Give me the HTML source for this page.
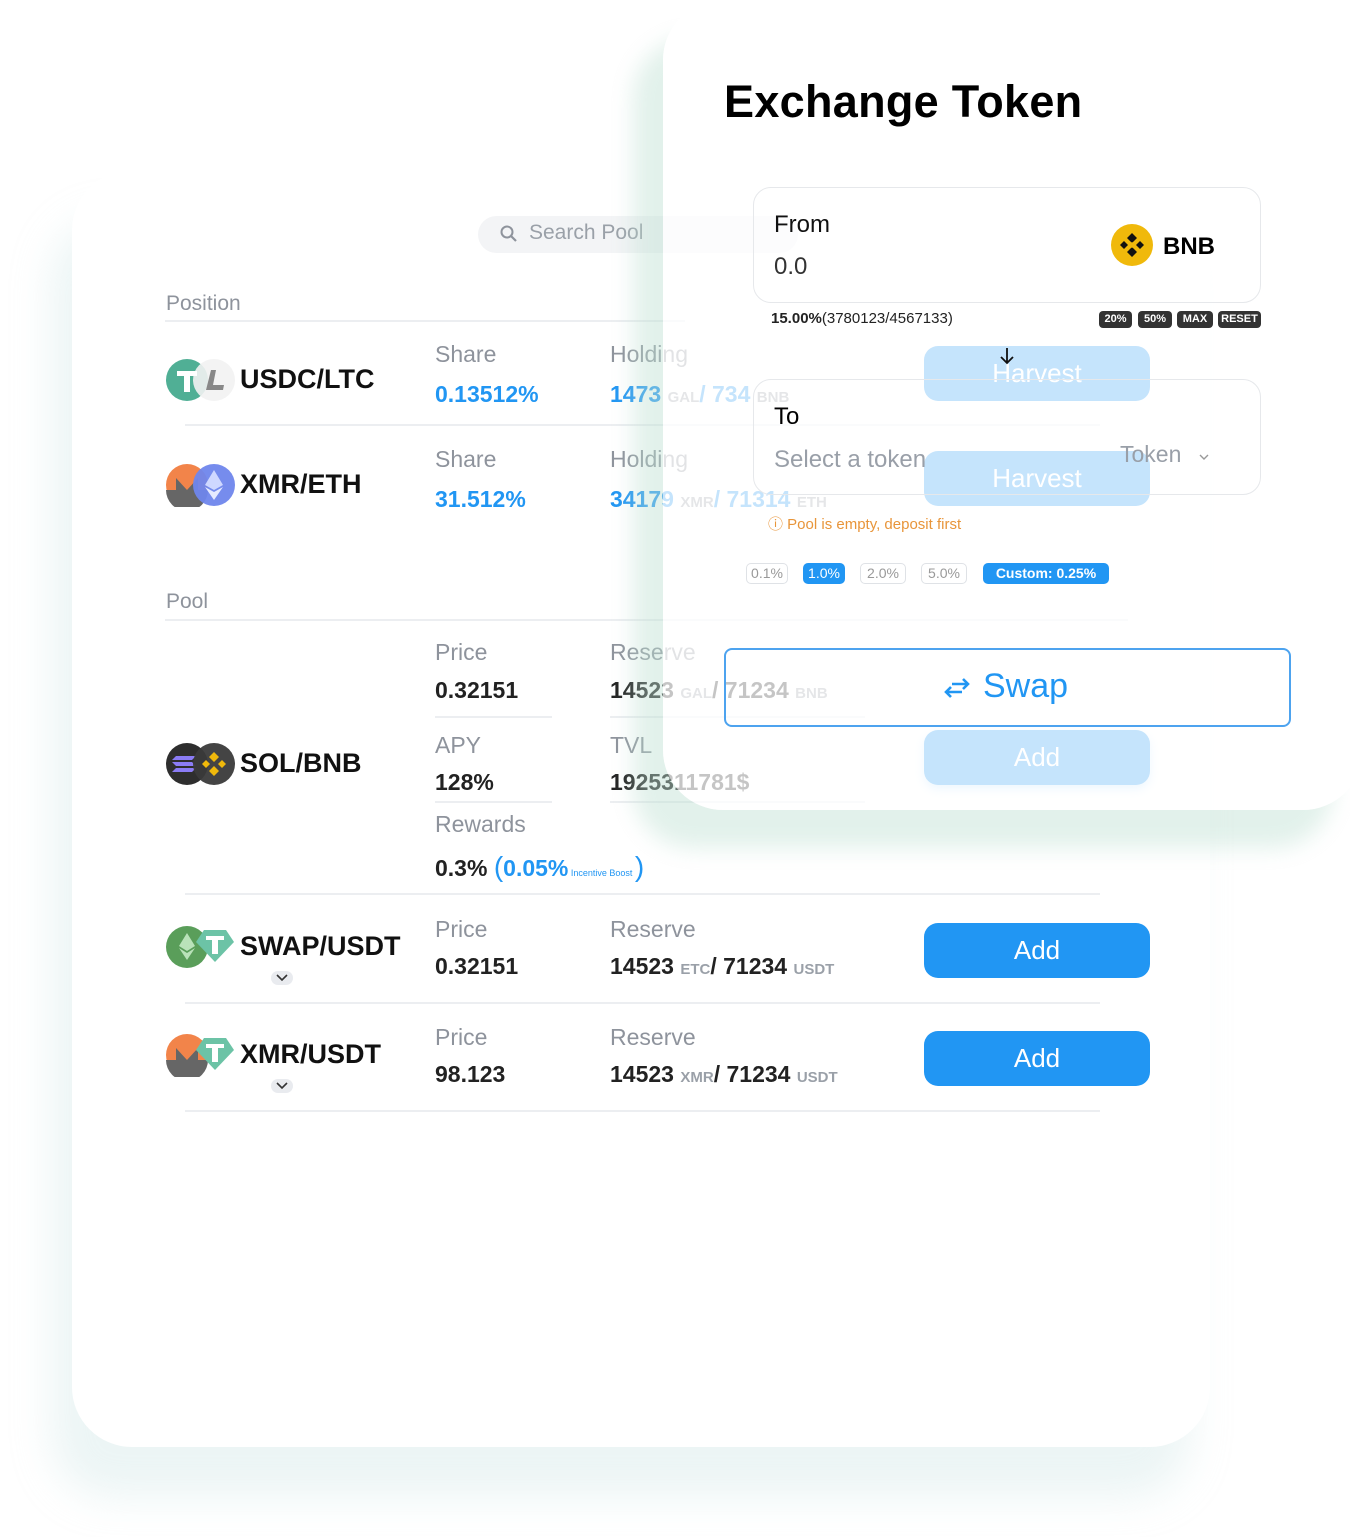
<!DOCTYPE html>
<html><head><meta charset="utf-8">
<style>
*{margin:0;padding:0;box-sizing:border-box}
body{width:1350px;height:1537px;background:#fff;position:relative;overflow:hidden;font-family:"Liberation Sans",sans-serif;color:#111}
.abs{position:absolute;white-space:nowrap}
#back{position:absolute;left:72px;top:170px;width:1138px;height:1277px;background:#fff;border-radius:60px;box-shadow:-20px 50px 40px rgba(200,225,225,0.35)}
.lbl{color:#8e939c;font-size:23px}
.val{font-size:23px;font-weight:bold;color:#222}
.blue{color:#2196f3}
.line{position:absolute;height:2px;background:#eceef1}
.pair{font-size:27px;font-weight:bold;color:#111}
.btn{position:absolute;width:226px;height:55px;background:#2196f3;border-radius:14px;color:#fff;font-size:26px;text-align:center;line-height:55px}
.sm{font-size:15px;color:#9aa0a8;font-weight:bold}
.chev{position:absolute;width:22px;height:14px;background:#e9ebef;border-radius:7px}
#front{position:absolute;left:663px;top:0;width:700px;height:810px;background:rgba(255,255,255,0.74);border-radius:60px;box-shadow:-30px 38px 22px rgba(190,225,210,0.45)}
.box{position:absolute;left:753px;width:508px;height:116px;border:1.5px solid #e6e8eb;border-radius:18px}
.badge{position:absolute;top:311px;height:17px;background:#333;color:#fff;font-size:11px;font-weight:bold;border-radius:4px;text-align:center;line-height:17px}
.chip{position:absolute;top:563px;height:21px;border:1.5px solid #dfe2e6;border-radius:5px;color:#999;font-size:14px;text-align:center;line-height:18px}
.chip.on{background:#2196f3;border-color:#2196f3;color:#fff}
</style></head><body>
<div id="back"></div>

<div class="abs" style="left:478px;top:216px;width:320px;height:37px;background:#f3f4f6;border-radius:19px"></div>
<svg class="abs" style="left:499px;top:224px" width="20" height="20" viewBox="0 0 20 20"><circle cx="8" cy="8" r="5.5" fill="none" stroke="#8e939c" stroke-width="2"/><line x1="12" y1="12" x2="17" y2="17" stroke="#8e939c" stroke-width="2.2"/></svg>
<div class="abs" style="left:529px;top:221px;font-size:21px;color:#9aa0a8">Search Pool</div>

<div class="abs lbl" style="left:166px;top:292px;font-size:21px">Position</div>
<div class="line" style="left:165px;top:320px;width:520px"></div>

<!-- USDC/LTC -->
<svg class="abs" style="left:166px;top:358px" width="72" height="44"><circle cx="21" cy="22" r="21" fill="#50af95"/><circle cx="48" cy="22" r="21" fill="#f2f2f2" opacity=".9"/><path d="M11 13h20v5h-7v16h-6V18h-7z" fill="#fff"/><path d="M45 12h5l-3 15h11l-1 5H40z" fill="#888"/></svg>
<div class="abs pair" style="left:240px;top:364px">USDC/LTC</div>
<div class="abs lbl" style="left:435px;top:341px">Share</div>
<div class="abs val blue" style="left:435px;top:381px">0.13512%</div>
<div class="abs lbl" style="left:610px;top:341px">Holding</div>
<div class="abs val blue" style="left:610px;top:381px">1473 <span class="sm">GAL</span>/ 734 <span class="sm">BNB</span></div>
<div class="line" style="left:185px;top:424px;width:915px"></div>

<!-- XMR/ETH -->
<svg class="abs" style="left:166px;top:463px" width="72" height="44"><circle cx="21" cy="22" r="21" fill="#f2844a"/><path d="M0 27h10V15l11 12 11-12v12h10a21 21 0 0 1-42 0z" fill="#666"/><circle cx="48" cy="22" r="21" fill="#6f86ec" opacity=".95"/><path d="M48 7l9 15-9 5-9-5z" fill="#cfd8ff"/><path d="M48 29l9-5-9 13-9-13z" fill="#e5eaff"/></svg>
<div class="abs pair" style="left:240px;top:469px">XMR/ETH</div>
<div class="abs lbl" style="left:435px;top:446px">Share</div>
<div class="abs val blue" style="left:435px;top:486px">31.512%</div>
<div class="abs lbl" style="left:610px;top:446px">Holding</div>
<div class="abs val blue" style="left:610px;top:486px">34179 <span class="sm">XMR</span>/ 71314 <span class="sm">ETH</span></div>

<div class="btn" style="left:924px;top:346px">Harvest</div>
<div class="btn" style="left:924px;top:451px">Harvest</div>

<div class="abs lbl" style="left:166px;top:590px;font-size:21px">Pool</div>
<div class="line" style="left:165px;top:619px;width:963px"></div>

<!-- SOL/BNB -->
<svg class="abs" style="left:166px;top:742px" width="72" height="44"><circle cx="21" cy="22" r="21" fill="#2e2e2e"/><path d="M10 14h20l-4 4H6zM6 20h20l4 4H10zM10 26h20l-4 4H6z" fill="#8b7cf5"/><circle cx="48" cy="22" r="21" fill="#3a3a3a" opacity=".95"/><path d="M48 10l5 5-5 5-5-5zM40 18l4 4-4 4-4-4zM56 18l4 4-4 4-4-4zM48 24l5 5-5 5-5-5z" fill="#f0b90b"/></svg>
<div class="abs pair" style="left:240px;top:748px">SOL/BNB</div>
<div class="abs lbl" style="left:435px;top:639px">Price</div>
<div class="abs val" style="left:435px;top:677px">0.32151</div>
<div class="abs lbl" style="left:610px;top:639px">Reserve</div>
<div class="abs val" style="left:610px;top:677px">14523 <span class="sm">GAL</span>/ 71234 <span class="sm">BNB</span></div>
<div class="line" style="left:435px;top:716px;width:117px"></div>
<div class="line" style="left:610px;top:716px;width:255px"></div>
<div class="abs lbl" style="left:435px;top:732px">APY</div>
<div class="abs val" style="left:435px;top:769px">128%</div>
<div class="abs lbl" style="left:610px;top:732px">TVL</div>
<div class="abs val" style="left:610px;top:769px">1925311781$</div>
<div class="line" style="left:435px;top:801px;width:117px"></div>
<div class="line" style="left:610px;top:801px;width:255px"></div>
<div class="abs lbl" style="left:435px;top:811px">Rewards</div>
<div class="abs val" style="left:435px;top:851px">0.3% <span class="blue" style="font-weight:normal;font-size:28px">(</span><span class="blue">0.05%</span><span class="blue" style="font-size:9px;font-weight:normal"> Incentive Boost </span><span class="blue" style="font-weight:normal;font-size:28px">)</span></div>
<div class="btn" style="left:924px;top:730px;box-shadow:0 4px 10px rgba(33,150,243,.3)">Add</div>
<div class="line" style="left:185px;top:893px;width:915px"></div>

<!-- SWAP/USDT -->
<svg class="abs" style="left:166px;top:925px" width="72" height="44"><circle cx="21" cy="22" r="21" fill="#5a9e5a"/><path d="M21 8l8 13-8 5-8-5zM21 28l8-5-8 12-8-12z" fill="#b9e2b9"/><path d="M38 5h22l8 12-19 20-19-20z" fill="#6cc3a6"/><path d="M40 11h18v4h-6v14h-6V15h-6z" fill="#fff"/></svg>
<div class="abs pair" style="left:240px;top:931px">SWAP/USDT</div>
<div class="chev" style="left:271px;top:971px"></div>
<svg class="abs" style="left:275px;top:973px" width="14" height="10"><path d="M2 2l5 5 5-5" fill="none" stroke="#333" stroke-width="1.6"/></svg>
<div class="abs lbl" style="left:435px;top:916px">Price</div>
<div class="abs val" style="left:435px;top:953px">0.32151</div>
<div class="abs lbl" style="left:610px;top:916px">Reserve</div>
<div class="abs val" style="left:610px;top:953px">14523 <span class="sm">ETC</span>/ 71234 <span class="sm">USDT</span></div>
<div class="btn" style="left:924px;top:923px">Add</div>
<div class="line" style="left:185px;top:1002px;width:915px"></div>

<!-- XMR/USDT -->
<svg class="abs" style="left:166px;top:1033px" width="72" height="44"><circle cx="21" cy="22" r="21" fill="#f2844a"/><path d="M0 27h10V15l11 12 11-12v12h10a21 21 0 0 1-42 0z" fill="#666"/><path d="M38 5h22l8 12-19 20-19-20z" fill="#6cc3a6"/><path d="M40 11h18v4h-6v14h-6V15h-6z" fill="#fff"/></svg>
<div class="abs pair" style="left:240px;top:1039px">XMR/USDT</div>
<div class="chev" style="left:271px;top:1079px"></div>
<svg class="abs" style="left:275px;top:1081px" width="14" height="10"><path d="M2 2l5 5 5-5" fill="none" stroke="#333" stroke-width="1.6"/></svg>
<div class="abs lbl" style="left:435px;top:1024px">Price</div>
<div class="abs val" style="left:435px;top:1061px">98.123</div>
<div class="abs lbl" style="left:610px;top:1024px">Reserve</div>
<div class="abs val" style="left:610px;top:1061px">14523 <span class="sm">XMR</span>/ 71234 <span class="sm">USDT</span></div>
<div class="btn" style="left:924px;top:1031px">Add</div>
<div class="line" style="left:185px;top:1110px;width:915px"></div>

<!-- FRONT CARD -->
<div id="front"></div>
<div class="abs" style="left:724px;top:76px;font-size:45px;font-weight:bold;color:#000;letter-spacing:0.3px">Exchange Token</div>

<div class="box" style="top:187px"></div>
<div class="abs" style="left:774px;top:211px;font-size:24px;color:#111">From</div>
<div class="abs" style="left:774px;top:253px;font-size:24px;color:#333">0.0</div>
<svg class="abs" style="left:1111px;top:224px" width="42" height="42"><circle cx="21" cy="21" r="21" fill="#f0b90b"/><path d="M21 9l5 5-5 5-5-5zM13 17l4 4-4 4-4-4zM29 17l4 4-4 4-4-4zM21 23l5 5-5 5-5-5z" fill="#111"/><path d="M21 18l3 3-3 3-3-3z" fill="#f0b90b"/></svg>
<div class="abs" style="left:1163px;top:233px;font-size:24px;font-weight:bold;color:#000">BNB</div>

<div class="abs" style="left:771px;top:310px;font-size:15px;color:#222"><b>15.00%</b>(3780123/4567133)</div>
<div class="badge" style="left:1099px;width:33px">20%</div>
<div class="badge" style="left:1138px;width:34px">50%</div>
<div class="badge" style="left:1177px;width:36px">MAX</div>
<div class="badge" style="left:1218px;width:43px">RESET</div>

<svg class="abs" style="left:998px;top:346px" width="18" height="20"><path d="M9 2v15M3 11l6 6 6-6" fill="none" stroke="#111" stroke-width="1.8"/></svg>

<div class="box" style="top:379px"></div>
<div class="abs" style="left:774px;top:403px;font-size:24px;color:#000">To</div>
<div class="abs" style="left:774px;top:446px;font-size:24px;color:#999fa8">Select a token</div>
<div class="abs" style="left:1120px;top:441px;font-size:23px;color:#999fa8">Token</div>
<svg class="abs" style="left:1198px;top:452px" width="12" height="10"><path d="M2 3l4 4 4-4" fill="none" stroke="#999" stroke-width="1.4"/></svg>

<div class="abs" style="left:768px;top:513px;font-size:15px;color:#e8953a">ⓘ Pool is empty, deposit first</div>

<div class="chip" style="left:746px;width:42px">0.1%</div>
<div class="chip on" style="left:803px;width:42px">1.0%</div>
<div class="chip" style="left:860px;width:46px">2.0%</div>
<div class="chip" style="left:921px;width:46px">5.0%</div>
<div class="chip on" style="left:983px;width:126px;font-weight:bold">Custom: 0.25%</div>

<div class="abs" style="left:724px;top:648px;width:567px;height:79px;border:2px solid #4da3ef;border-radius:8px"></div>
<svg class="abs" style="left:942px;top:676px" width="30" height="24"><path d="M10 8h16M21 3l5 5-5 5M20 16H4M9 11l-5 5 5 5" fill="none" stroke="#2196f3" stroke-width="2.6"/></svg>
<div class="abs" style="left:983px;top:667px;font-size:34px;color:#2196f3">Swap</div>
</body></html>
